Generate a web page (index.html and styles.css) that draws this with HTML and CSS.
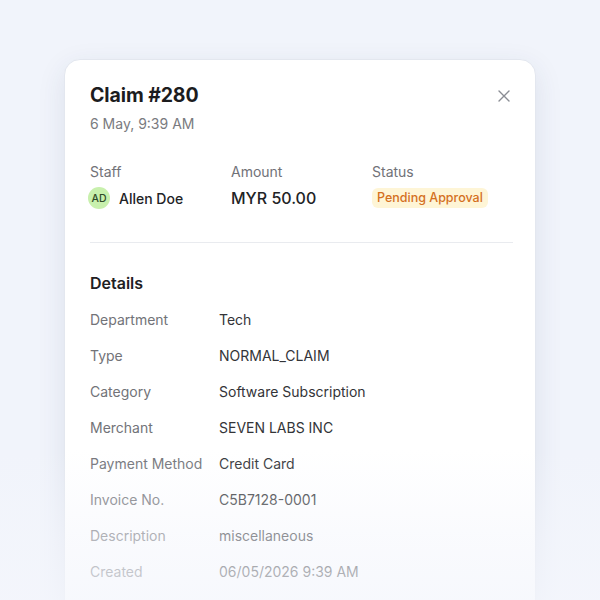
FILE: index.html
```html
<!DOCTYPE html>
<html>
<head>
<meta charset="utf-8">
<link rel="stylesheet" href="styles.css">
</head>
<body>
<div class="page">
  <div class="card">
    <div class="header">
      <div>
        <h1 class="title">Claim #280</h1>
        <div class="subtitle">6 May, 9:39 AM</div>
      </div>
      <button class="close" aria-label="Close">
        <svg width="14" height="14" viewBox="0 0 14 14"><path d="M2 2 L12 12 M12 2 L2 12" stroke="#8a8d94" stroke-width="1.4" stroke-linecap="round" fill="none"/></svg>
      </button>
    </div>
    <div class="stats">
      <div class="stat">
        <div class="stat-label">Staff</div>
        <div class="stat-value staff"><span class="avatar">AD</span>Allen Doe</div>
      </div>
      <div class="stat">
        <div class="stat-label">Amount</div>
        <div class="stat-value amount">MYR 50.00</div>
      </div>
      <div class="stat">
        <div class="stat-label">Status</div>
        <div class="stat-value"><span class="badge">Pending Approval</span></div>
      </div>
    </div>
    <div class="divider"></div>
    <h2 class="section">Details</h2>
    <div class="rows">
      <div class="row"><span class="k">Department</span><span class="v">Tech</span></div>
      <div class="row"><span class="k">Type</span><span class="v">NORMAL_CLAIM</span></div>
      <div class="row"><span class="k">Category</span><span class="v">Software Subscription</span></div>
      <div class="row"><span class="k">Merchant</span><span class="v">SEVEN LABS INC</span></div>
      <div class="row"><span class="k">Payment Method</span><span class="v">Credit Card</span></div>
      <div class="row"><span class="k">Invoice No.</span><span class="v">C5B7128-0001</span></div>
      <div class="row"><span class="k">Description</span><span class="v">miscellaneous</span></div>
      <div class="row"><span class="k">Created</span><span class="v">06/05/2026 9:39 AM</span></div>
    </div>
  </div>
  <div class="fade"></div>
</div>
</body>
</html>
```

FILE: styles.css
```css
* { box-sizing: border-box; }
html, body {
  margin: 0;
  padding: 0;
  width: 600px;
  height: 600px;
  overflow: hidden;
  background: #f1f4fb;
  font-family: Inter, "Noto Sans", sans-serif;
}
.page {
  position: relative;
  width: 600px;
  height: 600px;
  overflow: hidden;
  padding-top: 59px;
  padding-left: 64px;
}
.card {
  width: 472px;
  height: 560px;
  background: #fff;
  border: 1px solid #e3e7ef;
  border-radius: 16px;
  box-shadow: 0 8px 28px rgba(40, 55, 100, 0.1);
  padding: 21px 24px 0 25px;
}
.header {
  display: flex;
  justify-content: space-between;
  align-items: flex-start;
}
.title {
  margin: 0;
  font-size: 19.5px;
  line-height: 28px;
  font-weight: 700;
  color: #1c1c1e;
  letter-spacing: -0.1px;
}
.subtitle {
  margin-top: 5px;
  font-size: 14px;
  line-height: 20px;
  color: #7a7b80;
}
.close {
  border: 0;
  background: none;
  padding: 0;
  margin-top: 8px;
  width: 14px;
  height: 14px;
  display: flex;
}
.stats {
  display: grid;
  grid-template-columns: 141px 141px 1fr;
  margin-top: 28px;
}
.stat-label {
  font-size: 14px;
  line-height: 20px;
  color: #717278;
}
.stat-value {
  margin-top: 5px;
  height: 22px;
  display: flex;
  align-items: center;
  font-size: 14px;
  font-weight: 500;
  color: #222326;
}
.staff { gap: 9px; margin-left: -2px; }
.avatar {
  width: 22px;
  height: 22px;
  border-radius: 50%;
  background: #c8f0ad;
  color: #2f4a27;
  font-size: 10.5px;
  font-weight: 500;
  display: flex;
  align-items: center;
  justify-content: center;
}
.amount { font-size: 16px; }
.badge {
  background: #fef5d6;
  color: #d4701e;
  font-size: 12.5px;
  font-weight: 500;
  line-height: 20px;
  padding: 0 5px;
  border-radius: 6px;
}
.divider {
  height: 1px;
  background: #e9ebef;
  margin-top: 33px;
  margin-right: -2px;
}
.section {
  margin: 28px 0 0;
  font-size: 16px;
  line-height: 24px;
  font-weight: 600;
  color: #1f2023;
}
.rows {
  margin-top: 15px;
  display: flex;
  flex-direction: column;
  gap: 16px;
}
.row {
  display: grid;
  grid-template-columns: 129px 1fr;
  font-size: 14px;
  line-height: 20px;
}
.k { color: #727378; }
.v { color: #333438; }
.fade {
  position: absolute;
  left: 0;
  right: 0;
  bottom: 0;
  height: 150px;
  background: linear-gradient(to bottom, rgba(244, 246, 252, 0) 0%, rgba(244, 246, 252, 0.5) 60%, rgba(244, 246, 252, 0.75) 100%);
  pointer-events: none;
}
```
